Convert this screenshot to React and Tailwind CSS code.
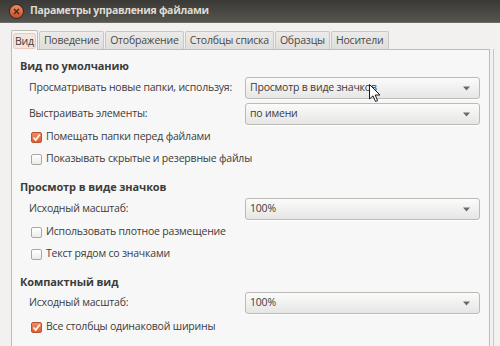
import React from "react";

const font = { fontFamily: '"Open Sans", "DejaVu Sans", sans-serif' };

const tabs = ["Вид", "Поведение", "Отображение", "Столбцы списка", "Образцы", "Носители"];

const Combo = ({ value }) => (
  <div className="flex h-[22px] w-[235px] shrink-0 items-center justify-between rounded-[3px] border border-[#bcbab5] bg-gradient-to-b from-[#fbfbfb] to-[#e6e6e5] pl-[4px] pr-[9px] text-[#3c3c3c] shadow-[0_1px_0_#ffffff]">
    <span>{value}</span>
    <svg width="7" height="5" viewBox="0 0 7 5">
      <path d="M0 0.5 L7 0.5 L3.5 4.5 Z" fill="#6a6a6a" />
    </svg>
  </div>
);

const LabeledCombo = ({ label, value, className }) => (
  <div className={"flex h-[22px] items-center justify-between pl-[9px] pr-[9px] " + className}>
    <span className="whitespace-nowrap">{label}</span>
    <Combo value={value} />
  </div>
);

const Check = ({ checked, label, className }) => (
  <div className={"flex h-[22px] items-center gap-[4px] pl-[11px] " + className}>
    {checked ? (
      <span className="flex h-[11px] w-[11px] items-center justify-center rounded-[2px] border border-[#b8552f] bg-gradient-to-b from-[#f08a5d] to-[#dd5f33]">
        <svg width="9" height="9" viewBox="0 0 9 9">
          <path d="M1.5 4.5 L3.7 7 L7.8 1.5" stroke="#fff4ee" strokeWidth="1.8" fill="none" />
        </svg>
      </span>
    ) : (
      <span className="h-[11px] w-[11px] rounded-[2px] border border-[#a9a7a3] bg-gradient-to-b from-[#ffffff] to-[#ecebea]" />
    )}
    <span className="whitespace-nowrap">{label}</span>
  </div>
);

const Heading = ({ children, className }) => (
  <div className={"flex h-[16px] items-center text-[11px] font-bold tracking-[-0.1px] " + className}>{children}</div>
);

export default function App() {
  return (
    <div
      className="relative h-[346px] w-[500px] overflow-hidden bg-[#f2f1f0] text-[10.5px] tracking-[-0.2px] text-[#3c3c3c]"
      style={font}
    >
      {/* заголовок окна */}
      <div className="flex h-[22px] items-center gap-[7px] bg-gradient-to-b from-[#3a3935] to-[#55544f] pl-[10px]">
        <span className="flex h-[13px] w-[13px] items-center justify-center rounded-full bg-gradient-to-b from-[#f5895c] to-[#d24a1f] shadow-[0_0_0_1px_#2e2d2a]">
          <svg width="7" height="7" viewBox="0 0 7 7">
            <path d="M1 1 L6 6 M6 1 L1 6" stroke="#3b2a24" strokeWidth="1.4" />
          </svg>
        </span>
        <span className="text-[10.5px] font-bold tracking-[-0.3px] text-[#dfdbd2]">Параметры управления файлами</span>
      </div>
      <div className="h-px bg-[#6b6a66]" />

      {/* вкладки */}
      <div className="flex gap-[1px] pl-[11px] pt-[7px]">
        {tabs.map((t, i) =>
          i === 0 ? (
            <div
              key={t}
              className="relative z-10 -mb-px flex h-[20px] items-center rounded-t-[2px] border border-b-0 border-[#bebcb8] bg-[#f7f7f7] px-[2px]"
            >
              <span className="rounded-[2px] bg-[#f5e4dc] px-[1px] leading-[14px] shadow-[0_0_0_1px_#e8c9bb]">{t}</span>
            </div>
          ) : (
            <div
              key={t}
              className="mt-[1px] flex h-[18px] items-center rounded-t-[2px] border border-b-0 border-[#cbc8c4] bg-gradient-to-b from-[#ecebe9] to-[#e0dedb] px-[4px] text-[#4a4a4a]"
            >
              {t}
            </div>
          )
        )}
      </div>

      {/* панель */}
      <div className="flex">
        <div className="ml-[11px] h-[300px] w-[479px] border border-[#bebcb8] bg-[#f7f7f7] pl-[8px] pt-[8px]">
          <Heading>Вид по умолчанию</Heading>
          <LabeledCombo className="mt-[3px]" label="Просматривать новые папки, используя:" value="Просмотр в виде значков" />
          <LabeledCombo className="mt-[4px]" label="Выстраивать элементы:" value="по имени" />
          <Check className="mt-[1px]" checked label="Помещать папки перед файлами" />
          <Check label="Показывать скрытые и резервные файлы" />

          <Heading className="mt-[9px]">Просмотр в виде значков</Heading>
          <LabeledCombo className="mt-[3px]" label="Исходный масштаб:" value="100%" />
          <Check className="mt-[1px]" label="Использовать плотное размещение" />
          <Check label="Текст рядом со значками" />

          <Heading className="mt-[9px]">Компактный вид</Heading>
          <LabeledCombo className="mt-[2px]" label="Исходный масштаб:" value="100%" />
          <Check className="mt-[2px]" checked label="Все столбцы одинаковой ширины" />
        </div>
        <div className="ml-[3px] h-[300px] w-px bg-[#c9c7c3]" />
      </div>

      {/* курсор мыши */}
      <svg className="absolute left-[369px] top-[84px]" width="12" height="19" viewBox="0 0 12 19">
        <path d="M0.5 0.5 L0.5 15 L4 11.8 L6.5 17.5 L8.6 16.6 L6.2 11 L11 11 Z" fill="#ffffff" stroke="#1a1a1a" strokeWidth="1" />
      </svg>
    </div>
  );
}
